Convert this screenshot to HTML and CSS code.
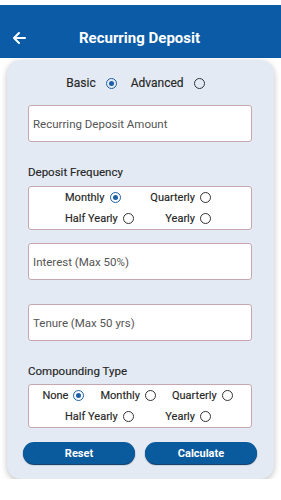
FILE: index.html
```html
<!DOCTYPE html>
<html>
<head>
    <title>Recurring Deposit</title>
    <link rel="stylesheet" href="styles.css">
</head>
<body>
    <div class="status-bar"></div>
    <div class="app-bar">
        <svg class="back-icon" width="14" height="14" viewBox="0 0 14 14">
            <path d="M13 7H2M7 2L2 7l5 5" fill="none" stroke="white" stroke-width="2" stroke-linecap="round" stroke-linejoin="round"/>
        </svg>
        <div class="title">Recurring Deposit</div>
    </div>

    <div class="card">
        <div class="mode-row">
            <label class="opt">Basic <span class="radio on"></span></label>
            <label class="opt">Advanced <span class="radio"></span></label>
        </div>

        <div class="field">Recurring Deposit Amount</div>

        <div class="section-label">Deposit Frequency</div>
        <div class="choice-box">
            <div class="choice-row split">
                <label class="opt">Monthly <span class="radio on"></span></label>
                <label class="opt">Quarterly <span class="radio"></span></label>
            </div>
            <div class="choice-row split">
                <label class="opt">Half Yearly <span class="radio"></span></label>
                <label class="opt">Yearly <span class="radio"></span></label>
            </div>
        </div>

        <div class="field field-interest">Interest (Max 50%)</div>
        <div class="field field-tenure">Tenure (Max 50 yrs)</div>

        <div class="section-label">Compounding Type</div>
        <div class="choice-box compact">
            <div class="choice-row three">
                <label class="opt">None <span class="radio on"></span></label>
                <label class="opt">Monthly <span class="radio"></span></label>
                <label class="opt">Quarterly <span class="radio"></span></label>
            </div>
            <div class="choice-row split">
                <label class="opt">Half Yearly <span class="radio"></span></label>
                <label class="opt">Yearly <span class="radio"></span></label>
            </div>
        </div>

        <div class="actions">
            <button class="btn">Reset</button>
            <button class="btn">Calculate</button>
        </div>
    </div>
</body>
</html>
```

FILE: styles.css
```css
:root {
    --primary: #0b5ba6;
    --button: #0a5a9e;
    --card-bg: #e3eaf3;
    --field-border: #c8a6ae;
    --text-color: #2b2b2b;
}

body {
    margin: 0;
    background: white;
    font-family: Roboto, 'Noto Sans', sans-serif;
    color: var(--text-color);
}

.status-bar {
    height: 5px;
}

.app-bar {
    height: 53px;
    background: var(--primary);
    display: flex;
    align-items: center;
    padding: 0 0 0 12px;
    box-sizing: border-box;
}

.back-icon {
    margin-top: 13px;
}

.title {
    flex: 1;
    text-align: center;
    color: white;
    font-weight: 700;
    font-size: 15px;
    margin: 13px 28px 0 0;
}

.card {
    margin: 2px 7px 0 7px;
    background: var(--card-bg);
    border-radius: 14px;
    box-shadow: 0 2px 6px rgba(0,0,0,0.25);
    padding: 15px 22px 15px 21px;
    display: flex;
    flex-direction: column;
}

.mode-row {
    display: flex;
    justify-content: center;
    gap: 14px;
    height: 16px;
    align-items: center;
    padding-right: 9px;
}

.opt {
    display: flex;
    align-items: center;
    gap: 5px;
    font-size: 11px;
    color: #262626;
    -webkit-text-stroke: 0.15px #262626;
}

.mode-row .opt {
    font-size: 12px;
    gap: 10px;
}

.radio {
    width: 9px;
    height: 9px;
    border: 1.5px solid #333;
    border-radius: 50%;
    display: inline-flex;
    align-items: center;
    justify-content: center;
}

.radio.on {
    border-color: #1c5fa6;
}

.radio.on::after {
    content: '';
    width: 5px;
    height: 5px;
    border-radius: 50%;
    background: #1c5fa6;
}

.field {
    margin-top: 14px;
    height: 37px;
    background: white;
    border: 1px solid var(--field-border);
    border-radius: 3px;
    box-sizing: border-box;
    display: flex;
    align-items: center;
    padding-left: 4px;
    font-size: 11.5px;
    color: #555;
}

.field-interest {
    margin-top: 13px;
}

.field-tenure {
    margin-top: 24px;
}

.section-label {
    margin-top: 23px;
    font-size: 11.5px;
    line-height: 14px;
    color: #262626;
    -webkit-text-stroke: 0.15px #262626;
}

.choice-box {
    margin-top: 7px;
    background: white;
    border: 1px solid var(--field-border);
    border-radius: 3px;
}

.choice-box.compact {
    margin-top: 6px;
}

.choice-row {
    height: 21px;
    display: flex;
    align-items: center;
}

.choice-row.split {
    justify-content: space-between;
    padding: 0 40px 0 36px;
}

.choice-row.three {
    justify-content: center;
    gap: 16px;
    padding: 0 5px 0 0;
}

.actions {
    margin: 14px -5px 0 -5px;
    display: flex;
    gap: 10px;
}

.btn {
    flex: 1;
    height: 22px;
    background: var(--button);
    color: white;
    border: none;
    border-radius: 11px;
    box-shadow: 0 1px 1px #03315c;
    font-family: Roboto, sans-serif;
    font-weight: 700;
    font-size: 11px;
    padding: 0;
}
```
